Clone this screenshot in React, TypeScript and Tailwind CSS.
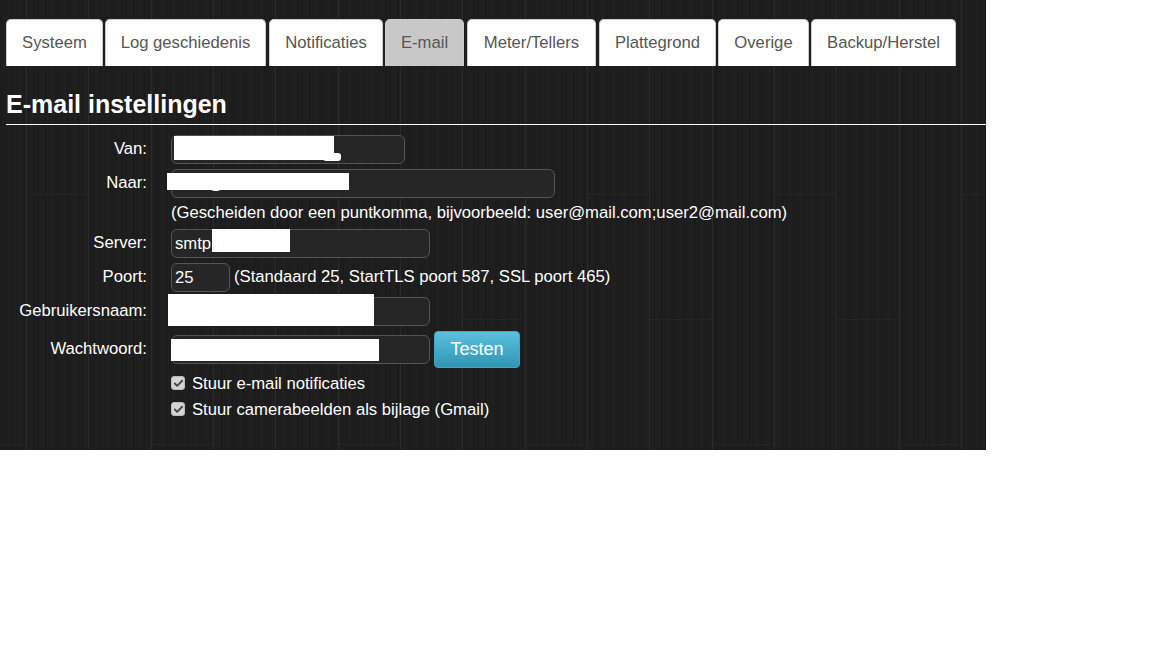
import { Check } from 'lucide-react';

const tabs = [
  { name: 'Systeem', width: 'w-[97px]' },
  { name: 'Log geschiedenis', width: 'ml-[2px] w-[161px]' },
  { name: 'Notificaties', width: 'ml-[3px] w-[114px]' },
  { name: 'E-mail', width: 'ml-[2px] w-[79px]' },
  { name: 'Meter/Tellers', width: 'ml-[3px] w-[129px]' },
  { name: 'Plattegrond', width: 'ml-[3px] w-[117px]' },
  { name: 'Overige', width: 'ml-[2px] w-[91px]' },
  { name: 'Backup/Herstel', width: 'ml-[2px] w-[145px]' },
];

const fieldClass =
  'h-[29px] rounded-[6px] border border-[#555] bg-[#262626] px-[3px] text-[16.67px] text-white outline-none';

function Row({ label, className, children }: { label: string; className: string; children: React.ReactNode }) {
  return (
    <div className={`flex items-center ${className}`}>
      <label className="-mt-[2px] w-[141px] shrink-0 text-right">{label}:</label>
      <div className="ml-[24px] flex items-center">{children}</div>
    </div>
  );
}

function Redacted({ className }: { className: string }) {
  return <span className={`absolute bg-white ${className}`} />;
}

function Option({ label, className }: { label: string; className: string }) {
  return (
    <label className={`ml-[165px] flex h-[20px] items-center ${className}`}>
      <span className="flex h-[14px] w-[14px] items-center justify-center rounded-[3px] border border-[#bbb] bg-[#d4d4d4]">
        <Check className="h-[11px] w-[11px] text-[#444]" strokeWidth={4} />
      </span>
      <span className="ml-[7px]">{label}</span>
    </label>
  );
}

export default function App() {
  return (
    <div className="h-[648px] bg-white">
      <div className="h-[450px] w-[986px] bg-[#1e1e1e] [background-image:linear-gradient(90deg,#262626_0,#262626_62px,transparent_62px),linear-gradient(90deg,#262626_0,#262626_62px,transparent_62px),linear-gradient(90deg,#262626_0,#262626_62px,transparent_62px),repeating-linear-gradient(90deg,transparent_0,transparent_26px,#2b2b2b_26px,#2b2b2b_27px,transparent_27px,transparent_62.33px),repeating-linear-gradient(90deg,#1c1c1c_0,#1c1c1c_3px,#202020_3px,#202020_4px,#1d1d1d_4px,#1d1d1d_7px,#1f1f1f_7px,#1f1f1f_11px)] [background-size:187px_1px,187px_1px,187px_1px,auto,auto] [background-position:26px_194px,88px_319px,150px_444px,0_0,0_0] [background-repeat:repeat-x,repeat-x,repeat-x,repeat,repeat] pl-[6px] pt-[19px] font-['Liberation_Sans',Arial,sans-serif] text-[16.67px] text-white">
        <ul className="flex h-[47px]">
          {tabs.map(tab => (
            <li
              key={tab.name}
              className={`flex items-center justify-center rounded-t-[5px] border border-b-0 border-[#ccc] pb-[2px] text-[#555] ${tab.width} ${tab.name === 'E-mail' ? 'bg-[#c8c8c8]' : 'bg-white'}`}
            >
              {tab.name}
            </li>
          ))}
        </ul>

        <h1 className="mt-[25px] h-[33px] text-[25px] font-bold leading-[27px]">E-mail instellingen</h1>
        <hr className="border-t border-white" />

        <form className="relative pt-[10px]">
          <Row label="Van" className="">
            <input className={`${fieldClass} w-[234px]`} />
            <Redacted className="left-[168px] top-[11px] h-[24px] w-[160px]" />
            <Redacted className="left-[317px] top-[28px] h-[8px] w-[18px] rounded-[3px]" />
          </Row>
          <Row label="Naar" className="mt-[5px]">
            <input className={`${fieldClass} w-[384px]`} defaultValue="user@mail.com" />
            <Redacted className="left-[161px] top-[48px] h-[17px] w-[182px]" />
          </Row>
          <p className="ml-[165px] mt-[1px] h-[27px] leading-[27px]">
            (Gescheiden door een puntkomma, bijvoorbeeld: user@mail.com;user2@mail.com)
          </p>
          <Row label="Server" className="mt-[3px]">
            <input className={`${fieldClass} w-[259px]`} defaultValue="smtp" />
            <Redacted className="left-[206px] top-[104px] h-[23px] w-[78px]" />
          </Row>
          <Row label="Poort" className="mt-[5px]">
            <input className={`${fieldClass} w-[59px]`} defaultValue="25" />
            <span className="-mt-[2px] ml-[4px]">(Standaard 25, StartTLS poort 587, SSL poort 465)</span>
          </Row>
          <Row label="Gebruikersnaam" className="mt-[5px]">
            <input className={`${fieldClass} w-[259px]`} />
            <Redacted className="left-[162px] top-[169px] h-[32px] w-[206px]" />
          </Row>
          <Row label="Wachtwoord" className="mt-[5px]">
            <input className={`${fieldClass} w-[259px]`} />
            <Redacted className="left-[165px] top-[214px] h-[22px] w-[208px]" />
            <button
              type="button"
              className="ml-[4px] h-[37px] w-[86px] rounded-[4px] border border-[#46a4c4] bg-gradient-to-b from-[#5bc0de] to-[#2f96b4] text-[18px] text-white"
            >
              Testen
            </button>
          </Row>
          <Option label="Stuur e-mail notificaties" className="mt-[5px]" />
          <Option label="Stuur camerabeelden als bijlage (Gmail)" className="mt-[6px]" />
        </form>
      </div>
    </div>
  );
}
